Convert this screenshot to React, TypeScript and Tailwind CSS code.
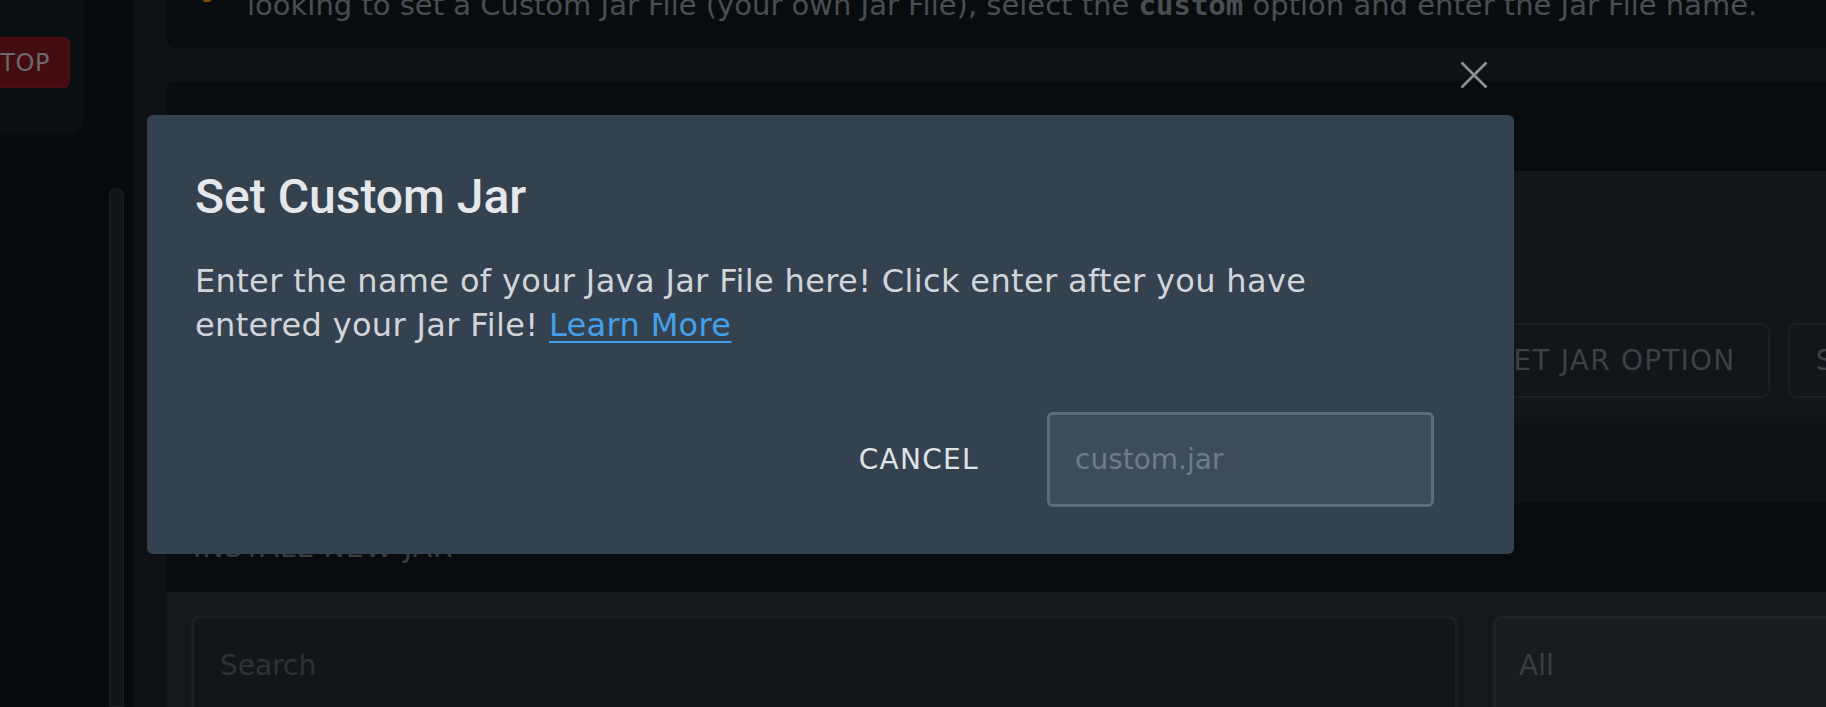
import React from "react";

const CloseIcon = () => (
  <svg width="28" height="28" viewBox="0 0 28 28" fill="none">
    <line x1="1.5" y1="1.5" x2="26.5" y2="26.5" stroke="#8e8e8e" strokeWidth="2.6" />
    <line x1="26.5" y1="1.5" x2="1.5" y2="26.5" stroke="#8e8e8e" strokeWidth="2.6" />
  </svg>
);

const Sidebar = () => {
  return (
    <aside className="flex w-[133px] shrink-0 flex-col bg-[#070a0d]">
      <div className="h-[135px] w-[84px] overflow-hidden rounded-br-2xl bg-[#0c0f12] pt-[37px]">
        <button className="-ml-[37px] flex h-[51px] w-[107px] items-center justify-end rounded-md border border-[#520d12] bg-[#440b10] pr-[19px] text-[24px] tracking-wide text-[#6a6a6a]">
          STOP
        </button>
      </div>
      {/* scroll track */}
      <div className="ml-[109px] mt-[53px] w-[15px] flex-1 rounded-t-full border border-[#1d2024] bg-[#111418]" />
    </aside>
  );
};

const PageContent = () => {
  return (
    <main className="min-w-0 flex-1 overflow-hidden bg-[#0e1115] pl-[34px]">
      {/* info card, scrolled mostly out of view */}
      <section className="flex h-[48px] items-start rounded-bl-lg bg-[#090c0f]">
        <span className="ml-[36px] h-[2px] w-[8px] shrink-0 rounded-b-full bg-[#7d4c0b]" />
        <p className="-mt-[10px] ml-[36px] whitespace-nowrap text-[29px] leading-[30px] text-[#4a4d52]">
          looking to set a Custom Jar File (your own Jar File), select the{" "}
          <code className="font-['DejaVu_Sans_Mono',monospace] font-semibold">custom</code> option and enter the Jar File name.
        </p>
      </section>

      {/* jar options */}
      <section className="mt-[33px] overflow-hidden rounded-tl-lg">
        <div className="h-[90px] bg-[#090c0f]" />
        <div className="flex h-[252px] items-end bg-[#121519] pb-[25px]">
          <div className="flex shrink-0 gap-[18px] pl-[1293px]">
            <button className="flex h-[75px] w-[310px] shrink-0 items-center justify-center rounded-lg border-2 border-[#1b1e22] text-[28px] tracking-[1.2px] text-[#3d4045]">
              SET JAR OPTION
            </button>
            <button className="flex h-[75px] w-[310px] shrink-0 items-center justify-center rounded-lg border-2 border-[#1b1e22] text-[28px] tracking-[1.2px] text-[#3d4045]">
              SET CUSTOM JAR
            </button>
          </div>
        </div>
      </section>

      {/* install new jar */}
      <section className="mt-[80px] overflow-hidden rounded-tl-lg">
        <div className="h-[89px] border-b border-[#050709] bg-[#090c0f] pl-[26px] pt-[28px]">
          <h3 className="text-[28px] leading-[34px] tracking-[1.2px] text-[#3a3d42]">INSTALL NEW JAR</h3>
        </div>
        <div className="flex h-[200px] gap-[35px] bg-[#14171b] pl-[24px] pt-[24px]">
          <div className="flex h-[100px] w-[1267px] shrink-0 items-center rounded-lg border-[3px] border-[#1b1e22] bg-[#131619] pl-[26px] text-[28px] text-[#2e3136]">
            Search
          </div>
          <div className="flex h-[100px] w-[400px] shrink-0 items-center rounded-lg border-[3px] border-[#1e2125] bg-[#181b1f] pl-[23px] text-[28px] text-[#3a3d42]">
            All
          </div>
        </div>
      </section>
    </main>
  );
};

const CustomJarDialog = () => {
  return (
    <div className="absolute left-[147px] top-[115px] w-[1367px] rounded-md bg-[#344250] pb-[47px] pt-[58px]">
      <h2 className="pl-[48px] font-['Roboto',sans-serif] text-[48px] font-medium leading-[48px] text-[#e4e7eb]">
        Set Custom Jar
      </h2>
      <p className="mt-[38px] max-w-[1190px] pl-[48px] text-[32px] leading-[44px] tracking-[0.35px] text-[#d0d5db]">
        Enter the name of your Java Jar File here! Click enter after you have entered your Jar File!{" "}
        <a href="#" className="text-[#42a0ea] underline decoration-2 underline-offset-[5px]">
          Learn More
        </a>
      </p>
      <div className="mt-[65px] flex items-center justify-end gap-[48px] pr-[80px]">
        <button className="px-[20px] text-[28px] tracking-[1.3px] text-[#dfe3e7]">CANCEL</button>
        <input
          placeholder="custom.jar"
          className="h-[95px] w-[387px] rounded-md border-[3px] border-[#5d6b7a] bg-[#3e4b59] pl-[25px] text-[28px] text-[#dfe3e7] outline-none placeholder:text-[#6f7c8a]"
        />
      </div>
    </div>
  );
}

export default function App() {
  return (
    <div className="relative h-[707px] w-full overflow-hidden bg-[#070a0d] font-['DejaVu_Sans',sans-serif]">
      <div className="flex h-full">
        <Sidebar />
        <PageContent />
      </div>
      <button className="absolute left-[1460px] top-[61px]">
        <CloseIcon />
      </button>
      <CustomJarDialog />
    </div>
  );
}
